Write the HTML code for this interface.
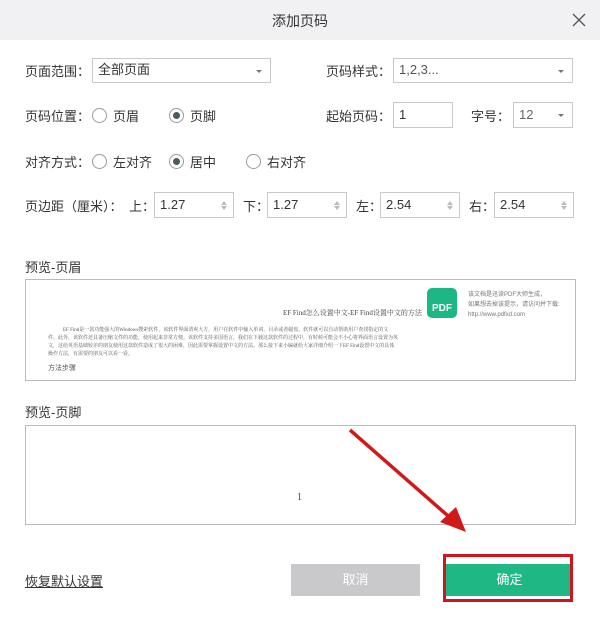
<!DOCTYPE html>
<html><head><meta charset="utf-8"><style>
*{margin:0;padding:0;box-sizing:border-box}
body{width:600px;height:620px;background:#fff;font-family:"Liberation Sans","Noto Sans CJK SC",sans-serif;font-size:13px;color:#333;position:relative;overflow:hidden}
.a{position:absolute;white-space:nowrap}
.box{position:absolute;border:1px solid #c9c9c9;background:#fff;padding-left:5px;line-height:22px}
.dd::after{content:"";position:absolute;right:8px;top:11px;border:3px solid transparent;border-top:3px solid #777}
.r{position:absolute;width:15px;height:15px;border:1px solid #999;border-radius:50%;background:#fff}
.r.on::after{content:"";position:absolute;left:3px;top:3px;width:7px;height:7px;border-radius:50%;background:#4a5a5e}
.sp::before{content:"";position:absolute;right:6px;top:5px;border:3px solid transparent;border-bottom:4px solid #bbb}
.sp::after{content:"";position:absolute;right:6px;bottom:4px;border:3px solid transparent;border-top:4px solid #bbb}
</style></head><body>
<div class="a" style="left:0;top:0;width:600px;height:40px;background:#f1f0f2"></div>
<div class="a" style="left:0;top:11px;width:600px;text-align:center;font-size:14px;color:#333">添加页码</div>
<svg class="a" style="left:572px;top:13px" width="14" height="14"><path d="M1 1L13 13M13 1L1 13" stroke="#555" stroke-width="1.3"/></svg>

<div class="a" style="left:25px;top:61px">页面范围：</div>
<div class="box dd" style="left:92px;top:58px;width:179px;height:25px">全部页面</div>
<div class="a" style="left:326px;top:61px">页码样式：</div>
<div class="box dd" style="left:393px;top:58px;width:180px;height:25px;color:#555">1,2,3...</div>

<div class="a" style="left:25px;top:106px">页码位置：</div>
<div class="r" style="left:92px;top:108px"></div><div class="a" style="left:113px;top:106px">页眉</div>
<div class="r on" style="left:169px;top:108px"></div><div class="a" style="left:190px;top:106px">页脚</div>
<div class="a" style="left:326px;top:106px">起始页码：</div>
<div class="box" style="left:393px;top:102px;width:60px;height:26px;line-height:24px">1</div>
<div class="a" style="left:471px;top:106px">字号：</div>
<div class="box dd" style="left:513px;top:102px;width:60px;height:26px;color:#666;line-height:24px">12</div>

<div class="a" style="left:25px;top:152px">对齐方式：</div>
<div class="r" style="left:92px;top:154px"></div><div class="a" style="left:113px;top:152px">左对齐</div>
<div class="r on" style="left:169px;top:154px"></div><div class="a" style="left:190px;top:152px">居中</div>
<div class="r" style="left:246px;top:154px"></div><div class="a" style="left:267px;top:152px">右对齐</div>

<div class="a" style="left:25px;top:196px">页边距（厘米）：</div>
<div class="a" style="left:129px;top:196px">上：</div><div class="box sp" style="left:154px;top:192px;width:80px;height:26px;line-height:24px">1.27</div>
<div class="a" style="left:243px;top:196px">下：</div><div class="box sp" style="left:267px;top:192px;width:80px;height:26px;line-height:24px">1.27</div>
<div class="a" style="left:356px;top:196px">左：</div><div class="box sp" style="left:380px;top:192px;width:80px;height:26px;line-height:24px">2.54</div>
<div class="a" style="left:469px;top:196px">右：</div><div class="box sp" style="left:494px;top:192px;width:80px;height:26px;line-height:24px">2.54</div>

<div class="a" style="left:25px;top:257px">预览-页眉</div>
<div class="a" style="left:25px;top:279px;width:551px;height:102px;border:1px solid #bbb"></div>
<div class="a" style="left:283px;top:308px;font-size:7px;color:#444;font-family:'Liberation Serif','Noto Serif CJK SC',serif">EF Find怎么设置中文-EF Find设置中文的方法</div>
<div class="a" style="left:427px;top:288px;width:30px;height:30px;background:#1cb784;border-radius:5px;color:#fff;font-size:10px;font-weight:bold;text-align:center;line-height:42px">PDF</div>
<div class="a" style="left:468px;top:290px;font-size:6px;color:#777;line-height:10px">该文档是迅读PDF大师生成，<br>如果想去掉该提示，请访问并下载:<br>http://www.pdfxd.com</div>
<div class="a" style="left:48px;top:327px;font-size:5px;color:#555;line-height:8px;font-family:'Liberation Serif','Noto Serif CJK SC',serif">　　　EF Find是一款功能强大的Windows搜索软件，该软件界面清爽大方，用户在软件中输入单词、目录或者磁盘，软件就可以自动帮助用户查找指定的文<br>件。此外，该软件还具备压缩文件的功能，使用起来非常方便。该软件支持多国语言，我们在下载这款软件的过程中，有时候可能会不小心将界面语言设置为英<br>文，这给英语基础较差的朋友使用这款软件造成了很大的困难，因此需要掌握设置中文的方法。那么接下来小编就给大家详细介绍一下EF Find设置中文的具体<br>操作方法，有需要的朋友可以看一看。</div>
<div class="a" style="left:48px;top:363px;font-size:7px;color:#555">方法步骤</div>

<div class="a" style="left:25px;top:402px">预览-页脚</div>
<div class="a" style="left:25px;top:425px;width:551px;height:100px;border:1px solid #bbb"></div>
<div class="a" style="left:297px;top:492px;font-size:10px;color:#444;font-family:'Liberation Serif',serif">1</div>

<div class="a" style="left:25px;top:571px;text-decoration:underline;color:#333">恢复默认设置</div>
<div class="a" style="left:291px;top:564px;width:129px;height:32px;background:#c9c8ca;color:#fff;text-align:center;line-height:32px">取消</div>
<div class="a" style="left:446px;top:564px;width:127px;height:32px;background:#1fb885;color:#fff;text-align:center;line-height:32px">确定</div>
<div class="a" style="left:443px;top:554px;width:130px;height:48px;border:3px solid #d0151b"></div>
<svg class="a" style="left:0;top:0" width="600" height="620"><path d="M350 430L455 522" stroke="#d01a1a" stroke-width="3.5"/><path d="M466 532L440 522L456 507Z" fill="#d01a1a"/></svg>
</body></html>
